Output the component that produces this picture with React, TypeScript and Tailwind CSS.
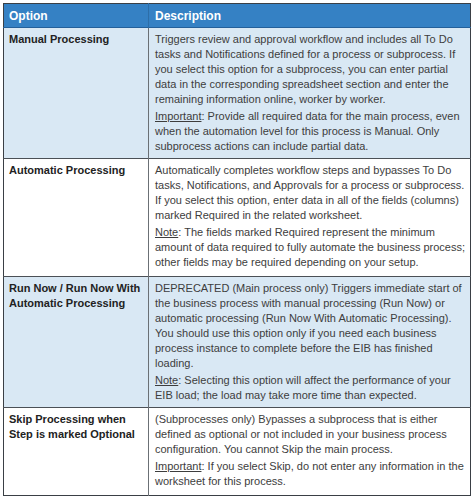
import React from "react"

interface Row {
  option: string[]
  shaded: boolean
  main: string[]
  label: string
  note: string[]
}

const rows: Row[] = [
  {
    option: ["Manual Processing"],
    shaded: true,
    main: [
      "Triggers review and approval workflow and includes all To Do",
      "tasks and Notifications defined for a process or subprocess. If",
      "you select this option for a subprocess, you can enter partial",
      "data in the corresponding spreadsheet section and enter the",
      "remaining information online, worker by worker.",
    ],
    label: "Important",
    note: [
      ": Provide all required data for the main process, even",
      "when the automation level for this process is Manual. Only",
      "subprocess actions can include partial data.",
    ],
  },
  {
    option: ["Automatic Processing"],
    shaded: false,
    main: [
      "Automatically completes workflow steps and bypasses To Do",
      "tasks, Notifications, and Approvals for a process or subprocess.",
      "If you select this option, enter data in all of the fields (columns)",
      "marked Required in the related worksheet.",
    ],
    label: "Note",
    note: [
      ": The fields marked Required represent the minimum",
      "amount of data required to fully automate the business process;",
      "other fields may be required depending on your setup.",
    ],
  },
  {
    option: ["Run Now / Run Now With", "Automatic Processing"],
    shaded: true,
    main: [
      "DEPRECATED (Main process only) Triggers immediate start of",
      "the business process with manual processing (Run Now) or",
      "automatic processing (Run Now With Automatic Processing).",
      "You should use this option only if you need each business",
      "process instance to complete before the EIB has finished",
      "loading.",
    ],
    label: "Note",
    note: [
      ": Selecting this option will affect the performance of your",
      "EIB load; the load may take more time than expected.",
    ],
  },
  {
    option: ["Skip Processing when", "Step is marked Optional"],
    shaded: false,
    main: [
      "(Subprocesses only) Bypasses a subprocess that is either",
      "defined as optional or not included in your business process",
      "configuration. You cannot Skip the main process.",
    ],
    label: "Important",
    note: [
      ": If you select Skip, do not enter any information in the",
      "worksheet for this process.",
    ],
  },
]

export default function App() {
  return (
    <div className="w-[474px] h-[497px] bg-white pt-[3px] pl-[3px] font-['Liberation_Sans',Arial,sans-serif]">
      <table className="w-[467px] border-collapse border border-[#3a3f45] table-fixed">
        <colgroup>
          <col className="w-[145px]" />
          <col className="w-[322px]" />
        </colgroup>
        <thead>
          <tr className="bg-[#3581c4] h-[24px] border-b border-[#24609a]">
            <th className="text-left text-white font-bold text-[12px] pl-[5px] align-middle border-r border-[#2d6ea8]">
              Option
            </th>
            <th className="text-left text-white font-bold text-[12px] pl-[6px] align-middle">Description</th>
          </tr>
        </thead>
        <tbody>
          {rows.map((row) => (
            <tr
              key={row.option.join(" ")}
              className={`border-t border-[#4b5056] ${row.shaded ? "bg-[#d9e8f4]" : "bg-white"}`}
            >
              <td className="align-top pl-[5px] pt-[4px] border-r border-[#6b7075] text-[11px] leading-[15px] font-bold text-[#222]">
                {row.option.map((line) => (
                  <div key={line} className="whitespace-nowrap">
                    {line}
                  </div>
                ))}
              </td>
              <td
                className={`align-top pl-[6px] pt-[4px] text-[11px] leading-[15px] text-[#3d3d3d] ${
                  row.shaded ? "pb-[4px]" : "pb-[6px]"
                }`}
              >
                {row.main.map((line) => (
                  <div key={line} className="whitespace-nowrap">
                    {line}
                  </div>
                ))}
                <div className="mt-[2px]">
                  {row.note.map((line, i) => (
                    <div key={line} className="whitespace-nowrap">
                      {i === 0 && <span className="underline">{row.label}</span>}
                      {line}
                    </div>
                  ))}
                </div>
              </td>
            </tr>
          ))}
        </tbody>
      </table>
    </div>
  )
}
